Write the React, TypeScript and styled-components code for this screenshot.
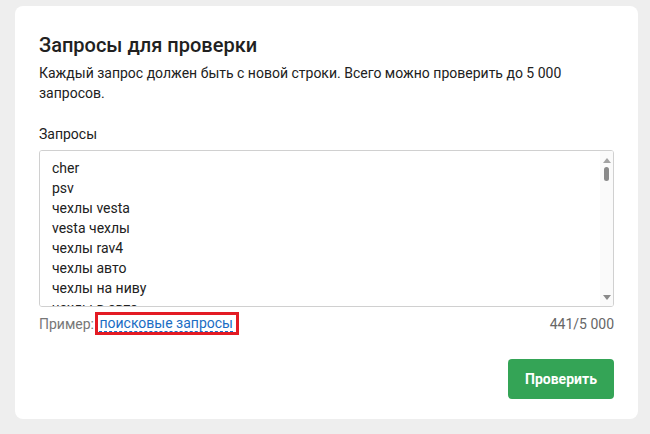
import styled, { createGlobalStyle } from 'styled-components'

const GlobalStyle = createGlobalStyle`
  html, body {
    margin: 0;
    padding: 0;
    background: #eeeeee;
    font-family: Roboto, 'Liberation Sans', sans-serif;
    color: #212121;
  }
`

const Page = styled.div`
  padding: 6px 12px 0 15px;
`

const Card = styled.section`
  width: 623px;
  height: 413px;
  box-sizing: border-box;
  background: #fff;
  border-radius: 8px;
  padding: 27px 24px 23px;
  display: flex;
  flex-direction: column;
`

const Title = styled.h2`
  margin: 0 0 6px;
  font-size: 20px;
  line-height: 24px;
  font-weight: 500;
  color: #212121;
`

const Description = styled.p`
  margin: 0;
  font-size: 14px;
  line-height: 20px;
  color: #212121;
`

const Label = styled.label`
  margin-top: 21px;
  font-size: 14px;
  line-height: 20px;
  color: #212121;
`

const FieldWrap = styled.div`
  position: relative;
  margin-top: 6px;
  height: 157px;
  flex-shrink: 0;
`

const Field = styled.textarea`
  display: block;
  height: 100%;
  box-sizing: border-box;
  width: 100%;
  resize: none;
  border: 1px solid #d0d0d0;
  border-radius: 3px;
  padding: 7px 24px 7px 12px;
  font-family: Roboto, 'Liberation Sans', sans-serif;
  font-size: 14px;
  line-height: 20px;
  color: #212121;
  overflow-y: scroll;
  outline: none;
  scrollbar-width: none;

  &::-webkit-scrollbar {
    display: none;
  }
`

const ScrollTrack = styled.div`
  position: absolute;
  top: 1px;
  right: 1px;
  bottom: 1px;
  width: 13px;
  background: #fafafa;
  border-radius: 0 2px 2px 0;
  display: flex;
  flex-direction: column;
  align-items: center;
  padding: 7px 0 6px;
  box-sizing: border-box;
  pointer-events: none;
`

const Arrow = styled.span<{ $down?: boolean }>`
  width: 0;
  height: 0;
  border-left: 4px solid transparent;
  border-right: 4px solid transparent;
  ${(p) => (p.$down ? 'border-top: 5px solid #8a8a8a;' : 'border-bottom: 5px solid #a3a3a3;')}
  ${(p) => (p.$down ? 'margin-top: auto;' : '')}
`

const Thumb = styled.span`
  margin-top: 4px;
  width: 5px;
  height: 14px;
  border-radius: 3px;
  background: #8a8a8a;
`

const Footer = styled.div`
  margin-top: 5px;
  display: flex;
  justify-content: space-between;
  align-items: center;
  font-size: 14px;
  line-height: 20px;
  color: #777;
`

const Example = styled.span`
  display: flex;
  align-items: center;
`

const Highlight = styled.span`
  display: inline-block;
  border: 3px solid #e31b23;
  margin-left: -2px;
  padding: 0 3px 0 1px;
  line-height: 17px;
`

const DashedLink = styled.a`
  color: #1a6dc4;
  text-decoration: none;
  border-bottom: 1px dashed #1a6dc4;
  cursor: pointer;
`

const Counter = styled.span`
  color: #666;
`

const Actions = styled.div`
  margin-top: 24px;
  display: flex;
  justify-content: flex-end;
`

const Button = styled.button`
  width: 106px;
  height: 40px;
  border: none;
  border-radius: 4px;
  background: #34a456;
  color: #fff;
  font-family: Roboto, 'Liberation Sans', sans-serif;
  font-size: 14px;
  font-weight: 700;
  cursor: pointer;
`

const queries = [
  'cher',
  'psv',
  'чехлы vesta',
  'vesta чехлы',
  'чехлы rav4',
  'чехлы авто',
  'чехлы на ниву',
  'чехлы в авто',
  'чехлы на сиденья',
  'авточехлы',
  'чехлы для авто',
  'чехлы на сиденья авто',
  'чехлы гранта',
  'чехлы лада веста',
  'чехлы на солярис',
  'чехлы рио',
  'чехлы поло',
  'чехлы экокожа',
  'чехлы на заказ',
  'модельные чехлы',
  'чехлы ниссан',
  'чехлы киа',
  'чехлы тойота',
  'чехлы рено',
  'чехлы шкода',
].join('\n')

const App = () => {
  return (
    <>
      <GlobalStyle />
      <Page>
        <Card>
          <Title>Запросы для проверки</Title>
          <Description>
            Каждый запрос должен быть с новой строки. Всего можно проверить до 5 000 запросов.
          </Description>
          <Label htmlFor="queries">Запросы</Label>
          <FieldWrap>
            <Field id="queries" defaultValue={queries} />
            <ScrollTrack>
              <Arrow />
              <Thumb />
              <Arrow $down />
            </ScrollTrack>
          </FieldWrap>
          <Footer>
            <Example>
              Пример:&nbsp;
              <Highlight>
                <DashedLink>поисковые запросы</DashedLink>
              </Highlight>
            </Example>
            <Counter>441/5 000</Counter>
          </Footer>
          <Actions>
            <Button>Проверить</Button>
          </Actions>
        </Card>
      </Page>
    </>
  )
}

export default App
